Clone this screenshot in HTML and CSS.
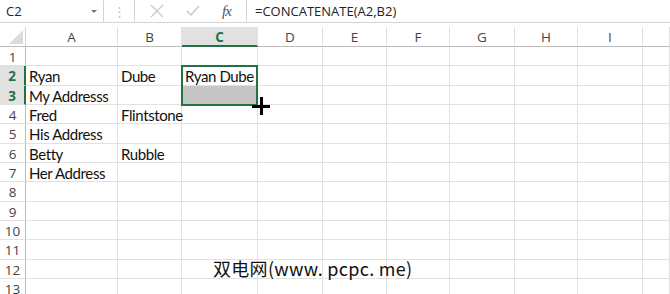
FILE: index.html
```html
<!DOCTYPE html>
<html lang="en">
<head>
    <meta charset="UTF-8">
    <title>Sheet</title>
    <link rel="stylesheet" href="styles.css">
</head>
<body>
    <div class="app">
        <div class="formula-bar">
            <div class="name-box">
                <span>C2</span>
                <span class="caret"></span>
            </div>
            <div class="grip">&#8942;</div>
            <div class="fx-buttons">
                <svg width="14" height="14" viewBox="0 0 14 14"><path d="M1 1L13 13M13 1L1 13" stroke="#c8c8c8" stroke-width="1.3" fill="none"/></svg>
                <svg width="14" height="12" viewBox="0 0 14 12"><path d="M1 6L5 10L13 1" stroke="#c8c8c8" stroke-width="1.5" fill="none"/></svg>
                <span class="fx">fx</span>
            </div>
            <div class="formula">=CONCATENATE(A2,B2)</div>
        </div>

        <div class="sheet">
            <div class="corner"><span class="tri"></span></div>
            <div class="col-head">A</div>
            <div class="col-head">B</div>
            <div class="col-head active">C</div>
            <div class="col-head">D</div>
            <div class="col-head">E</div>
            <div class="col-head">F</div>
            <div class="col-head">G</div>
            <div class="col-head">H</div>
            <div class="col-head">I</div>
            <div class="col-head"></div>

            <div class="row-head">1</div>
            <div class="cell"></div><div class="cell"></div><div class="cell"></div><div class="cell"></div><div class="cell"></div><div class="cell"></div><div class="cell"></div><div class="cell"></div><div class="cell"></div><div class="cell"></div>

            <div class="row-head active">2</div>
            <div class="cell">Ryan</div><div class="cell">Dube</div>
            <div class="cell current">Ryan Dube<div class="selection"></div></div>
            <div class="cell"></div><div class="cell"></div><div class="cell"></div><div class="cell"></div><div class="cell"></div><div class="cell"></div><div class="cell"></div>

            <div class="row-head active">3</div>
            <div class="cell">My Addresss</div><div class="cell"></div><div class="cell fill"></div><div class="cell"></div><div class="cell"></div><div class="cell"></div><div class="cell"></div><div class="cell"></div><div class="cell"></div><div class="cell"></div>

            <div class="row-head">4</div>
            <div class="cell">Fred</div><div class="cell">Flintstone</div><div class="cell"></div><div class="cell"></div><div class="cell"></div><div class="cell"></div><div class="cell"></div><div class="cell"></div><div class="cell"></div><div class="cell"></div>

            <div class="row-head">5</div>
            <div class="cell">His Address</div><div class="cell"></div><div class="cell"></div><div class="cell"></div><div class="cell"></div><div class="cell"></div><div class="cell"></div><div class="cell"></div><div class="cell"></div><div class="cell"></div>

            <div class="row-head">6</div>
            <div class="cell">Betty</div><div class="cell">Rubble</div><div class="cell"></div><div class="cell"></div><div class="cell"></div><div class="cell"></div><div class="cell"></div><div class="cell"></div><div class="cell"></div><div class="cell"></div>

            <div class="row-head">7</div>
            <div class="cell">Her Address</div><div class="cell"></div><div class="cell"></div><div class="cell"></div><div class="cell"></div><div class="cell"></div><div class="cell"></div><div class="cell"></div><div class="cell"></div><div class="cell"></div>

            <div class="row-head">8</div>
            <div class="cell"></div><div class="cell"></div><div class="cell"></div><div class="cell"></div><div class="cell"></div><div class="cell"></div><div class="cell"></div><div class="cell"></div><div class="cell"></div><div class="cell"></div>

            <div class="row-head">9</div>
            <div class="cell"></div><div class="cell"></div><div class="cell"></div><div class="cell"></div><div class="cell"></div><div class="cell"></div><div class="cell"></div><div class="cell"></div><div class="cell"></div><div class="cell"></div>

            <div class="row-head">10</div>
            <div class="cell"></div><div class="cell"></div><div class="cell"></div><div class="cell"></div><div class="cell"></div><div class="cell"></div><div class="cell"></div><div class="cell"></div><div class="cell"></div><div class="cell"></div>

            <div class="row-head">11</div>
            <div class="cell"></div><div class="cell"></div><div class="cell"></div><div class="cell"></div><div class="cell"></div><div class="cell"></div><div class="cell"></div><div class="cell"></div><div class="cell"></div><div class="cell"></div>

            <div class="row-head">12</div>
            <div class="cell"></div><div class="cell"></div><div class="cell"></div><div class="cell"></div><div class="cell"></div><div class="cell"></div><div class="cell"></div><div class="cell"></div><div class="cell"></div><div class="cell"></div>

            <div class="row-head">13</div>
            <div class="cell"></div><div class="cell"></div><div class="cell"></div><div class="cell"></div><div class="cell"></div><div class="cell"></div><div class="cell"></div><div class="cell"></div><div class="cell"></div><div class="cell"></div>

            <div class="cursor"></div>
            <div class="watermark">双电网(www. pcpc. me)</div>
        </div>
    </div>
</body>
</html>
```

FILE: styles.css
```css
* {
    margin: 0;
    padding: 0;
    box-sizing: border-box;
}

body {
    background: #ffffff;
    font-family: "Open Sans", "Liberation Sans", sans-serif;
    overflow: hidden;
}

.app {
    width: 670px;
    height: 294px;
    overflow: hidden;
}

/* formula bar */
.formula-bar {
    display: flex;
    height: 23px;
    border-bottom: 1px solid #d4d4d4;
    background: #ffffff;
}

.name-box {
    width: 104px;
    display: flex;
    align-items: center;
    justify-content: space-between;
    padding: 0 6px 0 6px;
    border-right: 1px solid #d4d4d4;
    font-size: 13px;
    color: #222;
}

.caret {
    width: 0;
    height: 0;
    border-left: 3px solid transparent;
    border-right: 3px solid transparent;
    border-top: 3px solid #777;
    margin-top: 1px;
}

.grip {
    width: 30px;
    text-align: center;
    color: #c4c4c4;
    font-size: 13px;
    line-height: 22px;
}

.fx-buttons {
    width: 112px;
    display: flex;
    align-items: center;
    justify-content: space-around;
    padding: 0 4px;
    border-left: 1px solid #d4d4d4;
}

.fx {
    font-family: "Liberation Serif", serif;
    font-style: italic;
    font-size: 15px;
    color: #555;
    letter-spacing: -1px;
}

.formula {
    flex: 1;
    border-left: 1px solid #d4d4d4;
    padding-left: 8px;
    font-size: 13px;
    line-height: 22px;
    color: #222;
}

/* sheet grid */
.sheet {
    position: relative;
    margin-top: 4px;
    display: grid;
    grid-template-columns: 26px 92px 64px 76px 65px 64px 63px 65px 63px 65px 1fr;
    grid-template-rows: 20px repeat(13, 19.33px);
}

.corner {
    position: relative;
    border-right: 1px solid #d4d4d4;
    border-bottom: 1px solid #bcbcbc;
}

.tri {
    position: absolute;
    right: 2px;
    bottom: 2px;
    width: 0;
    height: 0;
    border-left: 14px solid transparent;
    border-bottom: 14px solid #dcdcdc;
}

.col-head {
    border-right: 1px solid #e1e1e1;
    border-bottom: 1px solid #bcbcbc;
    text-align: center;
    font-size: 13.5px;
    line-height: 20px;
    color: #444;
}

.col-head.active {
    background: #e1e1e1;
    border-bottom: 2px solid #217346;
    color: #217346;
    font-weight: 700;
}

.row-head {
    border-right: 1px solid #bcbcbc;
    border-bottom: 1px solid #e1e1e1;
    text-align: center;
    font-size: 13.5px;
    line-height: 20px;
    color: #444;
}

.row-head.active {
    background: #e1e1e1;
    border-right: 2px solid #217346;
    color: #217346;
    font-weight: 700;
}

.cell {
    border-right: 1px solid #e1e1e1;
    border-bottom: 1px solid #e1e1e1;
    font-family: "Lato", "Open Sans", sans-serif;
    font-size: 15px;
    letter-spacing: -0.4px;
    line-height: 20px;
    padding-left: 3px;
    color: #111;
    white-space: nowrap;
}

.cell.fill {
    background: #c6c6c6;
}

.cell.current {
    position: relative;
}

.selection {
    position: absolute;
    left: -1px;
    top: -1px;
    width: calc(100% + 2px);
    height: 41px;
    border: 2px solid #217346;
    pointer-events: none;
    z-index: 2;
}

.cursor {
    position: absolute;
    left: 252px;
    top: 70px;
    width: 18px;
    height: 18px;
    z-index: 3;
}

.cursor::before,
.cursor::after {
    content: '';
    position: absolute;
    background: #000;
}

.cursor::before {
    left: 0;
    top: 8px;
    width: 18px;
    height: 3px;
}

.cursor::after {
    left: 8px;
    top: 0;
    width: 3px;
    height: 18px;
}

.watermark {
    position: absolute;
    left: 213px;
    top: 230px;
    font-family: "Noto Sans CJK SC", sans-serif;
    font-size: 18px;
    line-height: 22px;
    letter-spacing: 0.3px;
    color: #111;
    text-shadow: 0 0 2px #fff, 0 0 2px #fff;
    white-space: nowrap;
    z-index: 3;
}
```
